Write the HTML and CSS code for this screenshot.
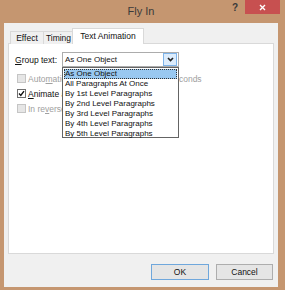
FILE: index.html
```html
<!DOCTYPE html>
<html lang="en">
<head>
    <meta charset="UTF-8">
    <title>Fly In</title>
    <link rel="stylesheet" href="styles.css">
</head>
<body>
    <div class="window">
        <div class="titlebar">
            <div></div>
            <div class="title">Fly In</div>
            <div class="controls">
                <span class="help">?</span>
                <span class="close">
                    <svg width="7" height="7" viewBox="0 0 7 7"><path d="M1 1L6 6M6 1L1 6" stroke="#fff" stroke-width="1.4" fill="none"/></svg>
                </span>
            </div>
        </div>

        <div class="client">
            <div class="tabs">
                <div class="tab effect">Effect</div>
                <div class="tab timing">Timing</div>
                <div class="tab active">Text Animation</div>
            </div>

            <div class="panel">
                <div class="group-row">
                    <span class="label"><u>G</u>roup text:</span>
                    <div class="combo">
                        <span class="combo-value">As One Object</span>
                        <span class="combo-arrow">
                            <svg width="7" height="5" viewBox="0 0 7 5"><path d="M1 1L3.5 3.6L6 1" stroke="#222" stroke-width="1.6" fill="none"/></svg>
                        </span>
                    </div>
                </div>

                <div class="check disabled">
                    <span class="box"></span>
                    <span>Auto<u>m</u>atically after</span>
                    <span class="spin">0</span>
                    <span>seconds</span>
                </div>
                <div class="check">
                    <span class="box checked">
                        <svg width="7" height="7" viewBox="0 0 7 7"><path d="M1 3.6L2.8 5.4L6 1.2" stroke="#111" stroke-width="1.4" fill="none"/></svg>
                    </span>
                    <span><u>A</u>nimate attached shape</span>
                </div>
                <div class="check disabled">
                    <span class="box"></span>
                    <span>In re<u>v</u>erse order</span>
                </div>

                <!-- lista aperta della combo -->
                <ul class="dropdown">
                    <li class="selected">As One Object</li>
                    <li>All Paragraphs At Once</li>
                    <li>By 1st Level Paragraphs</li>
                    <li>By 2nd Level Paragraphs</li>
                    <li>By 3rd Level Paragraphs</li>
                    <li>By 4th Level Paragraphs</li>
                    <li>By 5th Level Paragraphs</li>
                </ul>
            </div>

            <div class="buttons">
                <button class="btn default">OK</button>
                <button class="btn">Cancel</button>
            </div>
        </div>
    </div>
</body>
</html>
```

FILE: styles.css
```css
/* Finestra di dialogo stile Windows 8 */
html, body {
    margin: 0;
    padding: 0;
}

body {
    font-family: "Liberation Sans", Arial, sans-serif;
    font-size: 8.5px;
    color: #111;
}

.window {
    width: 285px;
    height: 290px;
    box-sizing: border-box;
    padding: 0 7px 3px 4px;
    background: #c59670;
    display: flex;
    flex-direction: column;
}

.titlebar {
    height: 23px;
    flex: none;
    display: grid;
    grid-template-columns: 1fr auto 1fr;
    align-items: start;
}

.title {
    padding-top: 5px;
    font-size: 11px;
    line-height: 13px;
    color: #3a3a3a;
}

.controls {
    display: flex;
    justify-content: flex-end;
    margin-right: -2px;
}

.help {
    font-size: 10px;
    font-weight: bold;
    line-height: 14px;
    color: #3a3a3a;
    margin-right: 7px;
    padding-top: 1px;
}

.close {
    width: 35px;
    height: 14px;
    background: #c75050;
    display: flex;
    justify-content: center;
    align-items: center;
}

.client {
    flex: 1;
    background: #f0f0f0;
    padding: 5px 4px 0 4px;
    display: flex;
    flex-direction: column;
}

/* Schede */
.tabs {
    display: flex;
    align-items: flex-end;
    height: 16px;
    padding-left: 2px;
    margin-bottom: -1px;
    position: relative;
    z-index: 1;
}

.tab {
    box-sizing: border-box;
    height: 13px;
    border: 1px solid #d9d9d9;
    border-bottom: none;
    background: #f0f0f0;
    line-height: 12px;
    text-align: center;
}

.tab.effect { width: 34px; }
.tab.timing { width: 31px; margin-left: -1px; }

.tab.active {
    width: 72px;
    height: 16px;
    margin-left: -2px;
    background: #fff;
    line-height: 15px;
}

.panel {
    position: relative;
    height: 211px;
    box-sizing: border-box;
    background: #fff;
    border: 1px solid #d9d9d9;
    padding: 8px 0 0 6px;
}

.group-row {
    display: flex;
    align-items: center;
    height: 15px;
}

.label {
    width: 47px;
}

.combo {
    box-sizing: border-box;
    width: 117px;
    height: 15px;
    border: 1px solid #acacac;
    display: flex;
    align-items: center;
    justify-content: space-between;
    padding: 0 1px 0 2px;
    font-size: 8px;
}

.combo-arrow {
    box-sizing: border-box;
    width: 14px;
    height: 13px;
    border: 1px solid #7eb4ea;
    background: #dcecfc;
    display: flex;
    align-items: center;
    justify-content: center;
}

.check {
    display: flex;
    align-items: center;
    gap: 2px;
    height: 15px;
    padding-left: 2px;
}

.group-row + .check {
    margin-top: 4px;
}

.box {
    box-sizing: border-box;
    width: 9px;
    height: 9px;
    border: 1px solid #707070;
    background: #fff;
    display: flex;
    align-items: center;
    justify-content: center;
}

.check.disabled {
    color: #a0a0a0;
}

.check.disabled .box {
    border-color: #c5c5c5;
    background: #e6e6e6;
}

.spin {
    width: 62px;
    height: 11px;
    margin: 0 2px;
    border: 1px solid #c5c5c5;
}

/* Lista a discesa */
.dropdown {
    position: absolute;
    left: 53px;
    top: 23px;
    z-index: 2;
    box-sizing: border-box;
    width: 117px;
    height: 71px;
    margin: 0;
    padding: 1px 1px 0 1px;
    list-style: none;
    background: #fff;
    border: 1px solid #646464;
    font-size: 8px;
}

.dropdown li {
    height: 10px;
    line-height: 10px;
    padding-left: 1px;
    white-space: nowrap;
    overflow: hidden;
}

.dropdown li.selected {
    box-sizing: border-box;
    background: #99c8f0;
    outline: 1px dotted #333;
    outline-offset: -1px;
}

/* Pulsanti */
.buttons {
    display: flex;
    justify-content: flex-end;
    gap: 7px;
    margin-top: 10px;
    padding-right: 1px;
}

.btn {
    box-sizing: border-box;
    height: 16px;
    padding: 0;
    font-family: inherit;
    font-size: 8.5px;
    color: #111;
    background: #e5e5e5;
    border: 1px solid #adadad;
}

.btn.default {
    width: 58px;
    border-color: #6fa7dc;
}

.btn:not(.default) {
    width: 57px;
}
```
